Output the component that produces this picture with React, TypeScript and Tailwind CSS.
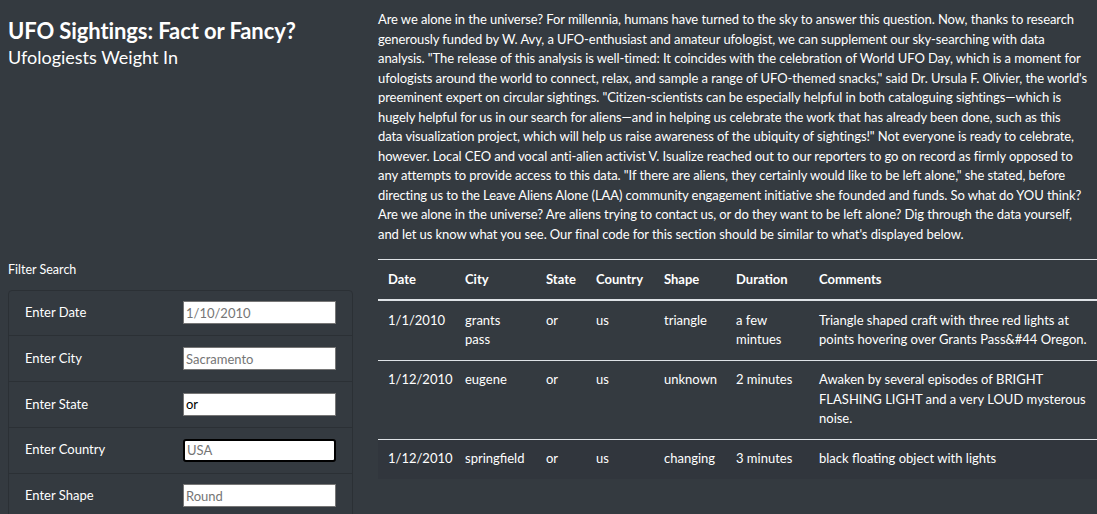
import React from "react"

// line breaks follow the original layout
const paraLines = [
  "Are we alone in the universe? For millennia, humans have turned to the sky to answer this question. Now, thanks to research",
  "generously funded by W. Avy, a UFO-enthusiast and amateur ufologist, we can supplement our sky-searching with data",
  "analysis. \"The release of this analysis is well-timed: It coincides with the celebration of World UFO Day, which is a moment for",
  "ufologists around the world to connect, relax, and sample a range of UFO-themed snacks,\" said Dr. Ursula F. Olivier, the world's",
  "preeminent expert on circular sightings. \"Citizen-scientists can be especially helpful in both cataloguing sightings\u2014which is",
  "hugely helpful for us in our search for aliens\u2014and in helping us celebrate the work that has already been done, such as this",
  "data visualization project, which will help us raise awareness of the ubiquity of sightings!\" Not everyone is ready to celebrate,",
  "however. Local CEO and vocal anti-alien activist V. Isualize reached out to our reporters to go on record as firmly opposed to",
  "any attempts to provide access to this data. \"If there are aliens, they certainly would like to be left alone,\" she stated, before",
  "directing us to the Leave Aliens Alone (LAA) community engagement initiative she founded and funds. So what do YOU think?",
  "Are we alone in the universe? Are aliens trying to contact us, or do they want to be left alone? Dig through the data yourself,",
  "and let us know what you see. Our final code for this section should be similar to what's displayed below.",
]

const filters = [
  { label: "Enter Date", placeholder: "1/10/2010" },
  { label: "Enter City", placeholder: "Sacramento" },
  { label: "Enter State", placeholder: "", value: "or" },
  { label: "Enter Country", placeholder: "USA", focused: true },
  { label: "Enter Shape", placeholder: "Round" },
]

const rows = [
  ["1/1/2010", "grants pass", "or", "us", "triangle", "a few mintues", "Triangle shaped craft with three red lights at points hovering over Grants Pass&#44 Oregon."],
  ["1/12/2010", "eugene", "or", "us", "unknown", "2 minutes", "Awaken by several episodes of BRIGHT FLASHING LIGHT and a very LOUD mysterous noise."],
  ["1/12/2010", "springfield", "or", "us", "changing", "3 minutes", "black floating object with lights"],
]

const cols = ["w-[77px]", "w-[81px]", "w-[50px]", "w-[68px]", "w-[72px]", "w-[83px]", "w-auto"]
const heads = ["Date", "City", "State", "Country", "Shape", "Duration", "Comments"]

export default function App() {
  return (
    <div className="flex h-[514px] overflow-hidden bg-[#343a40] text-white font-['Lato','Liberation_Sans',sans-serif] text-[13px] leading-[19.5px]">

      {/* ── Left column ─────────────────────────────────── */}
      <aside className="w-[370px] flex-shrink-0 pl-2">
        <h1 className="mt-[17px] text-[22px] leading-[28px] font-bold tracking-[-0.1px]">UFO Sightings: Fact or Fancy?</h1>
        <h2 className="text-[18px] leading-[24px]">Ufologiests Weight In</h2>

        <p className="mt-[191px] text-[12.5px]">Filter Search</p>

        <ul className="mt-[10px] w-[345px] border border-[#2b3035] rounded-t">
          {filters.map((f) => (
            <li key={f.label} className="flex items-center justify-between h-[45.75px] px-4 border-b border-[#2b3035]">
              <label>{f.label}</label>
              <input
                readOnly
                value={f.value ?? ""}
                placeholder={f.placeholder}
                className={[
                  "w-[153px] h-[23px] bg-white px-[2px] text-[13px] text-black placeholder:text-[#757575]",
                  f.focused
                    ? "border-2 border-black rounded-[3px] outline-none"
                    : "border border-[#767676] outline-none",
                ].join(" ")}
              />
            </li>
          ))}
        </ul>
      </aside>

      {/* ── Right column ────────────────────────────────── */}
      <main className="flex-1 min-w-0 pl-2">
        <p className="mt-[10px] whitespace-nowrap tracking-[-0.08px]">
          {paraLines.map((l, i) => (
            <React.Fragment key={i}>
              {l}
              {i < paraLines.length - 1 && <br />}
            </React.Fragment>
          ))}
        </p>

        <table className="mt-[15px] w-full table-fixed border-collapse">
          <thead>
            <tr className="border-t border-[#dee2e6] border-b-2">
              {heads.map((h, i) => (
                <th key={h} className={`${cols[i]} px-[10px] py-[9.75px] text-left font-bold`}>{h}</th>
              ))}
            </tr>
          </thead>
          <tbody>
            {rows.map((r, ri) => (
              <tr key={ri} className={ri < rows.length - 1 ? "border-b border-[#dee2e6]" : "bg-[#31363d]"}>
                {r.map((c, ci) => (
                  <td key={ci} className="px-[10px] py-[9.75px] align-top">{c}</td>
                ))}
              </tr>
            ))}
          </tbody>
        </table>
      </main>
    </div>
  )
}
